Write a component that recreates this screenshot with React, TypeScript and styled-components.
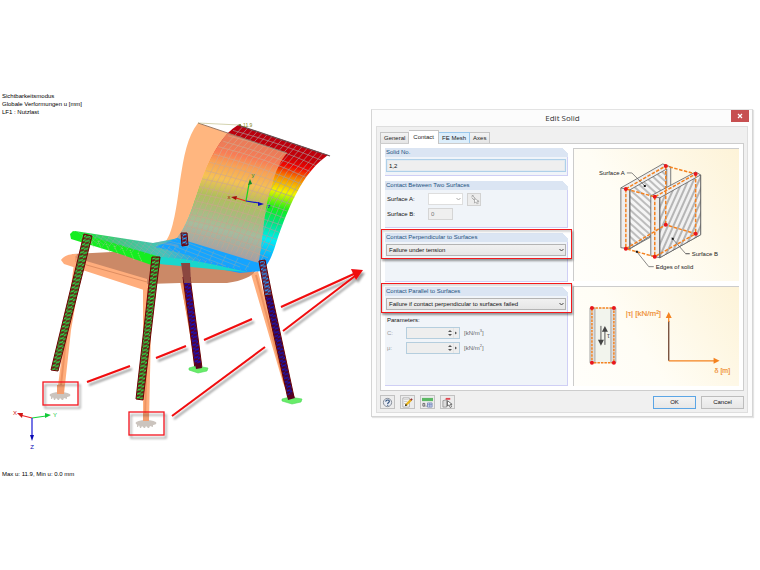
import React, { useId } from 'react';
import styled, { createGlobalStyle, css } from 'styled-components';

const Global = createGlobalStyle`
  *, *::before, *::after { box-sizing: border-box; }
  body { margin: 0; background: #fff; color: #111; }
  body, button, input, select { font-family: "Liberation Sans", Arial, sans-serif; font-size: 6px; line-height: 8px; }
`;

const Page = styled.main`
  display: grid;
  grid-template-columns: minmax(0, 371fr) minmax(0, 389fr);
  align-items: start;
  padding-top: 92px;
`;

/* ---------- Model viewer ---------- */

const Viewer = styled.section`
  display: flex;
  flex-direction: column;
`;

const Caption = styled.p`
  margin: 0;
  padding-left: 2px;
  color: #000;
  white-space: pre-line;
`;

const Scene = styled.svg`
  display: block;
  width: 100%;
  height: auto;
  margin: 1px 0;
  font-size: 6px;
`;

const meshLines = (() => {
  const left = [[238, 125], [217, 148], [200, 183], [187, 212], [178, 236]];
  const right = [[328, 155], [307, 180], [290, 208], [278, 238], [265, 264]];
  const at = (pts: number[][], t: number) => {
    const s = Math.min(t * 4, 3.999);
    const i = Math.floor(s);
    const f = s - i;
    return [pts[i][0] + (pts[i + 1][0] - pts[i][0]) * f, pts[i][1] + (pts[i + 1][1] - pts[i][1]) * f];
  };
  const parts: string[] = [];
  for (let r = 1; r < 17; r++) {
    const a = at(left, r / 17);
    const b = at(right, r / 17);
    const jog = r % 2 ? 1 : -1;
    parts.push(`M${a[0]} ${a[1]}Q${(a[0] + b[0]) / 2 + 4} ${(a[1] + b[1]) / 2 - 3 + jog} ${b[0]} ${b[1]}`);
  }
  for (let c = 1; c < 18; c++) {
    const f = c / 18;
    let d = '';
    for (let r = 0; r <= 8; r++) {
      const a = at(left, r / 8);
      const b = at(right, r / 8);
      d += `${r ? 'L' : 'M'}${a[0] + (b[0] - a[0]) * f} ${a[1] + (b[1] - a[1]) * f - f * (1 - f) * 6}`;
    }
    parts.push(d);
  }
  return parts.join('');
})();

const seatMesh = (() => {
  let d = '';
  for (let i = 0; i < 30; i++) {
    const x = 78 + i * 6;
    d += `M${x} ${232 + i}L${x + 14} ${243 + i}M${x + 8} ${232 + i}L${x} ${243 + i}`;
  }
  for (let i = 1; i < 6; i++) d += `M${75 + i * 18} ${231 + i}L260 ${258 + i * 2}`;
  return d;
})();

const SEAT = 'M71 234L75 231L153 243L179 238L262 264V271L240 273L210 267L160 264L120 252L71 238Z';
const BACK = 'M198 123C187 137 184 156 180 181C177 205 173 232 166 241L178 244L258 265C264 238 263 209 272 185C276 169 281 160 287 153Z';
const HULL = 'M238 125C223 134 213 152 204 174C195 198 189 224 177 238L262 271C274 258 275 243 282 226C293 198 305 171 328 155Z';

function Leg({ points, tint, base }: { points: string; tint: string; base: string }) {
  const id = useId();
  return (
    <>
      <defs>
        <pattern id={id} width="4" height="4" patternUnits="userSpaceOnUse" patternTransform="rotate(8)">
          <rect width="4" height="4" fill={base} />
          <path d="M0 3L2 1M2 4L4 2M2 0L4 -2" stroke={tint} strokeWidth="1.3" />
        </pattern>
      </defs>
      <polygon points={points} fill={`url(#${id})`} stroke="#6b0000" strokeWidth="1" />
    </>
  );
}

function Support({ x, y }: { x: number; y: number }) {
  return (
    <g transform={`translate(${x} ${y})`} fill="#cbc4be">
      <ellipse rx="10.5" ry="3" />
      <path d="M-9 1v3h1l1-2 1 3h1l1-2 2 2h1l1-2 2 2h1l1-2 3 1v-3z" />
    </g>
  );
}

function ChairScene() {
  return (
    <Scene viewBox="0 117 371 352" role="img" aria-label="Chair deformation">
      <defs>
        <linearGradient id="heat" gradientUnits="userSpaceOnUse" x1="292" y1="138" x2="266" y2="262">
          <stop offset="0" stopColor="#b80010" />
          <stop offset=".14" stopColor="#c40008" />
          <stop offset=".22" stopColor="#f20500" />
          <stop offset=".31" stopColor="#f78500" />
          <stop offset=".43" stopColor="#f2f200" />
          <stop offset=".57" stopColor="#12ef18" />
          <stop offset=".68" stopColor="#00e67c" />
          <stop offset=".82" stopColor="#00edf2" />
          <stop offset="1" stopColor="#129cff" />
        </linearGradient>
        <linearGradient id="veil" x1="0" y1="0" x2="0" y2="1">
          <stop offset="0" stopColor="#ffb37c" />
          <stop offset=".55" stopColor="#f3aa78" />
          <stop offset="1" stopColor="#e0a27e" />
        </linearGradient>
        <linearGradient id="seat" gradientUnits="userSpaceOnUse" x1="72" y1="240" x2="200" y2="225">
          <stop offset="0" stopColor="#15ee25" />
          <stop offset=".35" stopColor="#3fc982" />
          <stop offset=".7" stopColor="#46c3ba" />
          <stop offset="1" stopColor="#169fff" />
        </linearGradient>
        <clipPath id="seat-clip"><path d={SEAT} /></clipPath>
        <clipPath id="hull-clip"><path d={HULL} /></clipPath>
        <clipPath id="back-clip"><path d={BACK} /></clipPath>
        <filter id="shade" x="-20%" y="-20%" width="150%" height="150%">
          <feDropShadow dx="2" dy="3" stdDeviation="1" floodColor="#000" floodOpacity=".4" />
        </filter>
      </defs>

      <g fill="#ffae7c">
        <path d="M74 264L82 267L71 330L64 394H57L65 330Z" />
        <path d="M143 284H152L149 421H143Z" />
        <path d="M176 262H184L198 368L193 345Z" />
        <path d="M251 274L258 271L290 397L283 383Z" />
      </g>
      <path d="M79 270L67 330L60 394M148 288L145 421M179 266L195 358M256 275L286 388" fill="none" stroke="#ee9362" strokeWidth="2" />

      <path d="M73 254L150 250L258 266C256 274 247 280 227 283H180L147 284L63 261Z" fill="#cb8967" />
      <path d="M61 260C65 255 69 254 77 254L76 258L147 279V291L64 264Z" fill="#ffad7c" />
      <path d="M76 256L76 262L147 282" fill="none" stroke="#df8d61" />

      <path d={BACK} fill="#ffb67f" />
      <path d={SEAT} fill="url(#seat)" />
      <path d="M70 234L73 231L86 235L160 257V268L120 254L71 239Z" fill="#14ee20" />
      <path d="M177 238L262 263V271L238 267L185 254L155 247Z" fill="#15a4ff" />
      <path d="M160 257C190 258 223 267 248 272L222 270L160 264Z" fill="#19d7cc" />
      <path d={seatMesh} clipPath="url(#seat-clip)" stroke="#a2a5a8" strokeWidth=".7" opacity=".55" fill="none" />
      <path d="M90 239L94 248M98 241L102 250M106 244L110 252M114 246L118 254M122 248L126 257M130 250L134 260M138 253L142 262" stroke="#b2dc8b" strokeWidth=".8" strokeDasharray="1 1" />

      <path d={HULL} fill="url(#heat)" />
      <path d={meshLines} clipPath="url(#hull-clip)" stroke="#a39da3" strokeWidth=".6" fill="none" opacity=".85" />
      <path d="M238 125L330 156" stroke="#645052" strokeWidth="1.2" />
      <g clipPath="url(#back-clip)">
        <path d={HULL} fill="url(#veil)" opacity=".7" />
      </g>
      <path d={meshLines} clipPath="url(#hull-clip)" stroke="#b5a9a2" strokeWidth=".5" fill="none" opacity=".4" />
      <path d="M198 123L287 153" stroke="#9a7966" strokeWidth="1" />
      <path d="M177 238L262 264L260 271L238 269L180 253Z" fill="#15a4ff" />
      <path d="M183 241L249 267M178 243L240 267M174 246L226 266M190 243L185 253M202 247L197 257M214 251L209 261M226 255L221 265M238 258L233 268M250 262L245 270" stroke="#75a9bf" strokeWidth=".6" />

      <Leg points="84,234 92,236 58,371 51,370" tint="#25e54c" base="#6b1712" />
      <Leg points="152,257 160,257 143,400 136,399" tint="#25f04b" base="#6b0f13" />
      <Leg points="181,233 187,233 188,245 182,246" tint="#24a8ff" base="#740010" />
      <Leg points="183,277 190,277 202,368 195,369" tint="#1212d0" base="#5a0020" />
      <polygon points="181,263 190,263 191,283 184,283" fill="#8b4740" />
      <Leg points="259,261 265,260 272,295 265,296" tint="#2499ff" base="#701020" />
      <Leg points="265,296 272,295 294,397 288,399" tint="#1616bd" base="#4d001b" />

      <g fill="#68ec69" stroke="#4bd858" strokeWidth=".6">
        <path d="M189 368L196 366L208 368L207 371L198 373L189 370Z" />
        <path d="M282 399L290 397L302 399L301 402L292 404L282 401Z" />
      </g>
      <polygon points="195,364 201,363 202,368 196,369" fill="#58001e" />
      <polygon points="287,395 293,394 295,398 288,400" fill="#58001e" />

      <Support x={60} y={395} />
      <Support x={146} y={423} />
      <path d="M57 385H64V394H57ZM143 413H149V421H143Z" fill="#f29e70" />

      <g fill="none" stroke="#f3171b" strokeWidth="1.3" filter="url(#shade)">
        <rect x="43" y="382" width="35" height="23" />
        <rect x="129" y="412" width="35" height="23" />
      </g>
      <g stroke="#f0090c" strokeWidth="2" fill="none" filter="url(#shade)">
        <path d="M87 382L130 366M156 358L186 346M204 340L252 319M281 307L356 273M172 416L265 347M283 331L355 276" />
        <path d="M351 269L363 270L356 280Z" fill="#f0090c" stroke="none" />
      </g>

      <g strokeWidth="1.2" textAnchor="middle">
        <g stroke="#ef2020" fill="#cf1515"><path d="M32 418L20 415" /><path d="M17 413L23 413L22 418Z" stroke="none" /><text x="15" y="415" stroke="none">X</text></g>
        <g stroke="#13d43a" fill="#13c93a"><path d="M32 418L46 416" /><path d="M51 415L45 413V418Z" stroke="none" /><text x="55" y="417" stroke="none">Y</text></g>
        <g stroke="#1818d5" fill="#0909b5"><path d="M32 418V437" /><path d="M32 441L30 435H34Z" stroke="none" /><text x="32" y="449" stroke="none">Z</text></g>
        <g stroke="#e52a1a" fill="#a20d0d"><path d="M246 201L236 198" /><path d="M231 197L237 196L236 200Z" stroke="none" /><text x="229" y="199" stroke="none">x</text></g>
        <g stroke="#16d321" fill="#138d25"><path d="M246 201L249 184" /><path d="M250 179L248 185L252 184Z" stroke="none" /><text x="253" y="177" stroke="none">y</text></g>
        <g stroke="#1414cc" fill="#1111bb"><path d="M246 201L259 203" /><path d="M264 204L258 202V206Z" stroke="none" /><text x="269" y="208" stroke="none">z</text></g>
      </g>
      <path d="M198 123L239 125" stroke="#b7b67b" strokeWidth=".6" />
      <circle cx="240" cy="125" r="1" fill="#6c6d19" />
      <text x="243" y="127" fill="#898920" fontSize="5">11.9</text>
    </Scene>
  );
}

/* ---------- Dialog ---------- */

const Dialog = styled.section`
  margin: 17px 7px 0 0;
  padding: 0 4px 3px;
  border: 1px solid #d5d5d5;
  border-top-color: #e3e3e3;
  background: #fcfcfc;
  box-shadow: 1px 1px 1px #e4e4e4;
`;

const TitleBar = styled.header`
  display: grid;
  grid-template-columns: 18px 1fr 18px;
  height: 16px;
  align-items: start;
  margin-right: -1px;
`;

const Title = styled.h1`
  grid-column: 2;
  margin: 0;
  padding-top: 3px;
  font: 400 8px/10px "Open Sans", "Noto Sans", sans-serif;
  text-align: center;
  color: #333;
`;

const CloseButton = styled.button`
  display: grid;
  place-items: center;
  height: 12px;
  padding: 0;
  border: 0;
  background: #c74f50;
  color: #fff;
`;

const Body = styled.div`
  padding: 3px 3px 3px;
  border: 1px solid #dedede;
  background: #f0f0f0;
`;

const Tabs = styled.div`
  display: flex;
  align-items: flex-end;
  height: 13px;
`;

const Tab = styled.button<{ $active?: boolean; $hot?: boolean }>`
  height: 11px;
  padding: 0 3px;
  border: 1px solid #c5c5c5;
  border-bottom: 0;
  border-left-width: 0;
  background: linear-gradient(#f3f3f3, #e5e5e5);
  color: #222;
  &:first-child { border-left-width: 1px; }
  ${p => p.$hot && css`background: #dceefb; border-color: #9ac8ec;`}
  ${p => p.$active && css`
    height: 14px;
    margin-bottom: -1px;
    padding: 0 4px 2px;
    background: #fff;
    z-index: 1;
  `}
`;

const TabPanel = styled.div`
  display: grid;
  grid-template-columns: minmax(0, 184fr) minmax(0, 166fr);
  gap: 5px;
  padding: 4px;
  border: 1px solid #cdcdcd;
  background: #fff;
`;

const Column = styled.div`
  display: flex;
  flex-direction: column;
  gap: 5px;
`;

const Group = styled.section<{ $height: number }>`
  min-height: ${p => p.$height}px;
  padding-bottom: 3px;
  border-right: 1px solid #cfcff5;
  border-bottom: 1px solid #cfcff5;
  background: #f0f4f9;
`;

const GroupTitle = styled.h2`
  margin: 0 -1px 2px 0;
  padding: 0 1px;
  font-size: 6px;
  font-weight: 400;
  line-height: 9px;
  color: #1c527f;
  background: linear-gradient(225deg, #fff 4px, #dbe5f3 4px);
`;

const Marked = styled.div`
  position: relative;
  &::after {
    content: "";
    position: absolute;
    inset: -4px -5px -3px -4px;
    border: 1px solid #f2191c;
    box-shadow: 1px 2px 2px rgba(0, 0, 0, .4), inset 1px 2px 2px rgba(0, 0, 0, .15);
    pointer-events: none;
    z-index: 2;
  }
`;

const field = css`
  height: 12px;
  border: 1px solid #d5d5d5;
  border-radius: 0;
  background: #efefef;
  color: #111;
  padding: 0 2px;
  min-width: 0;
`;

const WideInput = styled.input`
  ${field}
  display: block;
  width: calc(100% - 2px);
  margin-left: 1px;
  height: 13px;
  border-color: #aed0e9;
  box-shadow: inset 0 0 0 1px #e2eaf0;
`;

const SelectBox = styled.span<{ $width?: number }>`
  display: grid;
  align-items: center;
  width: ${p => (p.$width ? `${p.$width}px` : 'calc(100% - 2px)')};
  margin-left: ${p => (p.$width ? 0 : 1)}px;
  > * { grid-area: 1 / 1; }
  > svg { justify-self: end; margin-right: 2px; pointer-events: none; }
`;

const Select = styled.select<{ $light?: boolean }>`
  ${field}
  width: 100%;
  appearance: none;
  border-color: ${p => (p.$light ? '#dedede' : '#b4b4b4')};
  background: ${p => (p.$light ? '#fff' : 'linear-gradient(#f1f1f1, #e6e6e6)')};
`;

const Row = styled.div`
  display: flex;
  align-items: center;
  height: 14px;
  padding-left: 2px;
  margin-bottom: 1px;
  gap: 4px;
`;

const Label = styled.label<{ $width: number; $dim?: boolean }>`
  flex: none;
  width: ${p => p.$width}px;
  color: ${p => (p.$dim ? '#999' : '#111')};
`;

const SmallInput = styled.input`
  ${field}
  width: 25px;
  color: #777;
`;

const Spinner = styled.span`
  display: flex;
  align-items: center;
  width: 54px;
  height: 12px;
  border: 1px solid #b5cede;
  background: #eee;
  > input { flex: 1; min-width: 0; height: 10px; border: 0; background: transparent; padding: 0 2px; }
`;

const Unit = styled.span`
  color: #666;
  sup { font-size: 4px; line-height: 0; }
`;

const Parameters = styled.p`
  margin: 6px 0 2px;
  padding-left: 2px;
`;

const Figure = styled.figure<{ $grow?: boolean }>`
  margin: 0;
  flex: ${p => (p.$grow ? 1 : 'none')};
  border-top: 1px solid #ccc;
  border-left: 1px solid #ccc;
  background: linear-gradient(235deg, #fdf3d8, #fffdf5 60%, #fffefa);
  > svg { display: block; width: 100%; height: auto; font-size: 6px; }
`;

const Footer = styled.footer`
  display: flex;
  align-items: center;
  gap: 5px;
  padding-top: 4px;
`;

const ToolButton = styled.button`
  display: grid;
  place-items: center;
  width: 15px;
  height: 14px;
  padding: 0;
  border: 1px solid #c2c2c2;
  background: #ececec;
  > svg { width: 11px; height: 11px; }
`;

const IconButton = styled(ToolButton)`
  height: 13px;
  width: 14px;
  border-color: #d2d2d2;
`;

const ActionButton = styled.button<{ $primary?: boolean }>`
  width: 43px;
  height: 13px;
  padding: 0;
  border: 1px solid ${p => (p.$primary ? '#5ba5e5' : '#bdbdbd')};
  background: linear-gradient(#f3f3f3, #e7e7e7);
  color: #111;
`;

const Spacer = styled.span`
  flex: 1;
`;

const Chevron = ({ color = '#444' }: { color?: string }) => (
  <svg width="5" height="4" viewBox="0 0 5 4"><path d="M.5 1L2.5 3L4.5 1" fill="none" stroke={color} /></svg>
);

const SpinArrows = () => (
  <svg width="12" height="10" viewBox="0 0 12 10"><path d="M1 4L3 2L5 4ZM1 6H5L3 8ZM8 3.5V6.5L10 5Z" fill="#555" /><path d="M6.5 0V10" stroke="#ddd" strokeWidth=".6" /></svg>
);

const PickIcon = () => (
  <svg viewBox="0 0 12 12" fill="none" stroke="#999"><path d="M3 1L7 5M3 4L6 7M5 1L3 3" strokeWidth=".9" /><path d="M6 5V10L7.5 8.5L9 11L10 10L9 8H11Z" fill="#fff" strokeWidth=".8" /></svg>
);

function SolidDiagram() {
  return (
    <svg viewBox="0 -1 165 132" role="img" aria-label="Contact surfaces of a solid">
      <defs>
        <pattern id="down" width="5" height="5" patternUnits="userSpaceOnUse" patternTransform="rotate(42)"><rect width="5" height="5" fill="#f5f5f5" /><path d="M0 2H5" stroke="#555" strokeWidth=".7" /></pattern>
        <pattern id="up" width="5" height="5" patternUnits="userSpaceOnUse" patternTransform="rotate(-66)"><rect width="5" height="5" fill="#f1f1f1" /><path d="M0 2H5" stroke="#444" strokeWidth=".7" /></pattern>
      </defs>
      <g stroke="#5c5c5c" strokeWidth=".8" strokeLinejoin="round">
        <path d="M47 38L89 14L97 17V76L56 99L47 98Z" fill="#eee" />
        <path d="M56 40L93 19V76L56 99Z" fill="url(#down)" />
        <path d="M77 46L122 22L127 25V85L86 108L77 106Z" fill="#eee" />
        <path d="M86 48L127 25V85L86 108Z" fill="url(#up)" />
        <path d="M77 46L86 48V108M47 38L56 40V99" fill="none" />
      </g>
      <path d="M52 39L92 16L122 24L81 47ZM52 99L92 75L122 84L81 107ZM52 39V99M92 16V75M122 24V84M81 47V107" fill="none" stroke="#f4821f" strokeWidth="1.5" strokeDasharray="3.5 1.5" />
      <g fill="#e9161c">
        {[[52, 39], [92, 16], [122, 24], [81, 47], [52, 99], [92, 75], [122, 84], [81, 107]].map(([x, y]) => <circle key={`${x}-${y}`} cx={x} cy={y} r="2" />)}
      </g>
      <path d="M53 23H58L71 36M112 104H116M98 88L112 104H116M63 102L75 117H80" fill="none" stroke="#555" strokeWidth=".7" />
      <path d="M70 35h2v2h-2zM98 88h2v2h-2zM62 101h2v2h-2z" fill="#111" />
      <g fill="#222">
        <text x="25" y="25">Surface A</text>
        <text x="118" y="106">Surface B</text>
        <text x="82" y="119">Edges of solid</text>
      </g>
    </svg>
  );
}

function ShearDiagram() {
  return (
    <svg viewBox="0 0 165 97" role="img" aria-label="Shear stress against displacement">
      <rect x="16" y="21" width="25" height="55" fill="#f2f4ed" />
      <path d="M16 21H21V76H16ZM37 21H42V76H37Z" fill="#ddd" stroke="#999" strokeWidth=".8" />
      <path d="M18 21H40V76H18Z" fill="none" stroke="#f4821f" strokeWidth="1.5" strokeDasharray="2.5 1" />
      <g fill="#e9161c"><circle cx="18" cy="21" r="2" /><circle cx="40" cy="21" r="2" /><circle cx="18" cy="76" r="2" /><circle cx="40" cy="76" r="2" /></g>
      <path d="M27 39V55M31 43V58" stroke="#555" />
      <path d="M27 59L24 53H30ZM31 39L28 45H34Z" fill="#444" />
      <text x="33" y="51" fill="#555" fontSize="7">τ</text>
      <path d="M95 74V34" stroke="#704632" strokeWidth="1.3" />
      <path d="M95 35V29M95 74H141" stroke="#f4821f" strokeWidth="1.2" />
      <path d="M95 25L92 31H98ZM146 74L140 71V77Z" fill="#f4821f" />
      <g fill="#f09035" stroke="#f09035" strokeWidth=".2">
        <text x="52" y="29" fontSize="8">|τ| [kN/m²]</text>
        <text x="141" y="86" fontSize="7">δ [m]</text>
      </g>
    </svg>
  );
}

export default function App() {
  return (
    <>
      <Global />
      <Page>
        <Viewer>
          <Caption>{'Sichtbarkeitsmodus\nGlobale Verformungen u [mm]\nLF1 : Nutzlast'}</Caption>
          <ChairScene />
          <Caption>Max u: 11.9, Min u: 0.0 mm</Caption>
        </Viewer>

        <Dialog role="dialog" aria-labelledby="dialog-title">
          <TitleBar>
            <Title id="dialog-title">Edit Solid</Title>
            <CloseButton aria-label="Close">
              <svg width="6" height="6" viewBox="0 0 6 6"><path d="M1 1L5 5M5 1L1 5" stroke="#fff" strokeWidth="1.2" /></svg>
            </CloseButton>
          </TitleBar>
          <Body>
            <Tabs role="tablist">
              <Tab role="tab">General</Tab>
              <Tab role="tab" aria-selected $active>Contact</Tab>
              <Tab role="tab" $hot>FE Mesh</Tab>
              <Tab role="tab">Axes</Tab>
            </Tabs>
            <TabPanel role="tabpanel">
              <Column>
                <Group $height={28}>
                  <GroupTitle id="solid-no">Solid No.</GroupTitle>
                  <WideInput aria-labelledby="solid-no" defaultValue="1,2" />
                </Group>
                <Group $height={47}>
                  <GroupTitle>Contact Between Two Surfaces</GroupTitle>
                  <Row>
                    <Label htmlFor="surface-a" $width={37}>Surface A:</Label>
                    <SelectBox $width={35}><Select id="surface-a" $light><option /></Select><Chevron color="#aaa" /></SelectBox>
                    <IconButton aria-label="Pick surface"><PickIcon /></IconButton>
                  </Row>
                  <Row>
                    <Label htmlFor="surface-b" $width={37}>Surface B:</Label>
                    <SmallInput id="surface-b" defaultValue="0" />
                  </Row>
                </Group>
                <Group $height={49}>
                  <Marked>
                    <GroupTitle id="perpendicular">Contact Perpendicular to Surfaces</GroupTitle>
                    <SelectBox><Select aria-labelledby="perpendicular"><option>Failure under tension</option></Select><Chevron /></SelectBox>
                  </Marked>
                </Group>
                <Group $height={99}>
                  <Marked>
                    <GroupTitle id="parallel">Contact Parallel to Surfaces</GroupTitle>
                    <SelectBox><Select aria-labelledby="parallel"><option>Failure if contact perpendicular to surfaces failed</option></Select><Chevron /></SelectBox>
                  </Marked>
                  <Parameters>Parameters:</Parameters>
                  <Row>
                    <Label htmlFor="param-c" $width={15} $dim>C:</Label>
                    <Spinner><input id="param-c" /><SpinArrows /></Spinner>
                    <Unit>[kN/m<sup>3</sup>]</Unit>
                  </Row>
                  <Row>
                    <Label htmlFor="param-mu" $width={15} $dim>μ:</Label>
                    <Spinner><input id="param-mu" /><SpinArrows /></Spinner>
                    <Unit>[kN/m<sup>2</sup>]</Unit>
                  </Row>
                </Group>
              </Column>
              <Column>
                <Figure><SolidDiagram /></Figure>
                <Figure $grow><ShearDiagram /></Figure>
              </Column>
            </TabPanel>
            <Footer>
              <ToolButton aria-label="Help">
                <svg viewBox="0 0 12 12"><circle cx="6" cy="6" r="4.5" fill="#e9edf5" stroke="#7f8590" /><path d="M4.2 5C4 3 8 2.5 8 4.8C8 6 6.2 6 6.2 7.5M6.2 8.5V9.5" fill="none" stroke="#35557f" strokeWidth="1.3" /></svg>
              </ToolButton>
              <ToolButton aria-label="Edit comment">
                <svg viewBox="0 0 12 12"><path d="M1 1H8V11H1Z" fill="#fff" stroke="#aaa" /><path d="M2 3H7M2 5H6M2 7H5" stroke="#aaa" strokeWidth=".7" /><path d="M4 9L10 3" stroke="#e8b51e" strokeWidth="2.5" /><path d="M3 10L6 9L4 7.5Z" fill="#222" /><path d="M9.5 3.5L11 2" stroke="#94353a" strokeWidth="2" /></svg>
              </ToolButton>
              <ToolButton aria-label="Units">
                <svg viewBox="0 0 12 12"><path d="M0 1H12V4.5H0Z" fill="#5cb865" /><path d="M1 7H3V10H1ZM4 10h1" fill="none" stroke="#555" strokeWidth=".9" /><path d="M6 6.5H11V11H6ZM6 8.5H11M8.5 6.5V11" fill="#dce4fa" stroke="#6678ae" strokeWidth=".8" /></svg>
              </ToolButton>
              <ToolButton aria-label="Select in graphic">
                <svg viewBox="0 0 12 12"><path d="M1 4L5 3V11H1Z" fill="#ddd" stroke="#888" strokeWidth=".8" /><path d="M4 1H9V3H4Z" fill="#df4650" /><path d="M6 4V10L7.5 8.5L9 11.5L10.5 10.5L9 8H11Z" fill="#fff" stroke="#444" strokeWidth=".8" /></svg>
              </ToolButton>
              <Spacer />
              <ActionButton $primary>OK</ActionButton>
              <ActionButton>Cancel</ActionButton>
            </Footer>
          </Body>
        </Dialog>
      </Page>
    </>
  );
}
